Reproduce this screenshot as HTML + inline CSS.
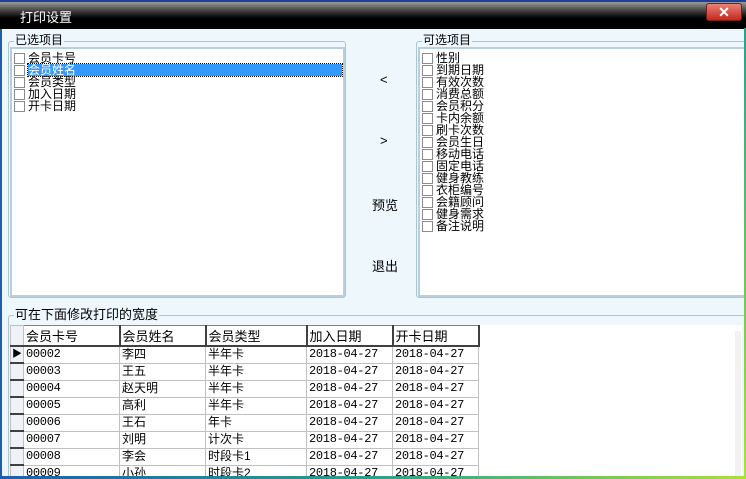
<!DOCTYPE html>
<html><head><meta charset="utf-8"><style>
*{margin:0;padding:0;box-sizing:border-box}
html,body{width:746px;height:479px;overflow:hidden}
body{background:#eef7fc;font-family:"Liberation Sans","Noto Sans CJK SC","WenQuanYi Zen Hei",sans-serif;font-size:12px;color:#000;position:relative}
.abs{position:absolute}
#title{left:0;top:0;width:746px;height:29px;border-top:2px solid #1d3f9a;background:linear-gradient(#9a9a9a,#3a3a3a 35%,#000 60%,#000);}
#title span{position:absolute;left:20px;top:5px;color:#fff;font-size:13px}
#close{right:4px;top:3px;width:36px;height:18px;background:linear-gradient(#e8827a,#c4281c);border:1px solid #7a1d15;border-radius:3px;color:#fff;font-weight:bold;text-align:center;line-height:16px;font-size:14px}
#leftedge{left:0;top:0;width:2px;height:479px;background:#1d5fae}
#rightedge{right:0;top:28px;width:2px;height:451px;background:linear-gradient(#2aa08c,#a8e23a)}
.grp{position:absolute;border:1px solid #a9c6d8;border-radius:3px}
.legend{position:absolute;background:#eef7fc;padding:0 1px;line-height:13px}
.box{position:absolute;background:#fff;border:2px solid #b9cfdd;}
.item{height:12px;line-height:12px;white-space:nowrap;position:relative;padding-left:16px}
.item i{position:absolute;left:2px;top:1px;width:11px;height:11px;border:1px solid #8a8a8a;background:#fff}
.sel span{background:#3399ff;color:#fff;outline:1px dotted #000;display:inline-block;width:314px}
.btn{position:absolute;font-size:13px}
table{border-collapse:collapse;position:absolute;left:10px;top:325px;background:#fff}
td{border:1px solid #c0c0c0;height:17px;padding:0 2px;font-size:12px;white-space:nowrap;line-height:15px}
th{border:1px solid #808080;border-right:2px solid #404040;border-bottom:2px solid #404040;height:17px;font-weight:normal;text-align:left;padding:0 2px;background:#fff;font-size:13px}
td.ind{width:13px;background:#eef2f6;border-color:#c0c0c0;border-bottom:2px solid #404040;padding:0}
td.d{font-family:"Liberation Mono",monospace;font-size:12px;letter-spacing:-0.3px}
</style></head><body>
<div id="leftedge" class="abs"></div>
<div id="title" class="abs"><span>打印设置</span></div>
<div id="close" class="abs">✕</div>

<div class="grp" style="left:8px;top:41px;width:338px;height:257px"></div>
<div class="legend" style="left:14px;top:34px">已选项目</div>
<div class="box" style="left:10px;top:47px;width:335px;height:250px;padding-top:3px">
<div class="item"><i></i>会员卡号</div>
<div class="item sel"><i></i><span>会员姓名</span></div>
<div class="item"><i></i>会员类型</div>
<div class="item"><i></i>加入日期</div>
<div class="item"><i></i>开卡日期</div>
</div>

<div class="grp" style="left:416px;top:41px;width:330px;height:257px"></div>
<div class="legend" style="left:422px;top:34px">可选项目</div>
<div class="box" style="left:418px;top:47px;width:328px;height:250px;padding-top:3px">
<div class="item"><i></i>性别</div>
<div class="item"><i></i>到期日期</div>
<div class="item"><i></i>有效次数</div>
<div class="item"><i></i>消费总额</div>
<div class="item"><i></i>会员积分</div>
<div class="item"><i></i>卡内余额</div>
<div class="item"><i></i>刷卡次数</div>
<div class="item"><i></i>会员生日</div>
<div class="item"><i></i>移动电话</div>
<div class="item"><i></i>固定电话</div>
<div class="item"><i></i>健身教练</div>
<div class="item"><i></i>衣柜编号</div>
<div class="item"><i></i>会籍顾问</div>
<div class="item"><i></i>健身需求</div>
<div class="item"><i></i>备注说明</div>
</div>

<div class="btn" style="left:380px;top:72px">&lt;</div>
<div class="btn" style="left:380px;top:133px">&gt;</div>
<div class="btn" style="left:372px;top:195px">预览</div>
<div class="btn" style="left:372px;top:256px">退出</div>

<div class="grp" style="left:8px;top:315px;width:740px;height:164px"></div>
<div class="legend" style="left:14px;top:308px;font-size:13px">可在下面修改打印的宽度</div>
<div class="abs" style="left:10px;top:325px;width:732px;height:154px;background:#fff"></div>
<div class="abs" style="left:735px;top:331px;width:6px;height:148px;background:#f2f2f2"></div>
<table>
<tr><td class="ind" style="border-bottom:2px solid #404040"></td><th style="width:96px">会员卡号</th><th style="width:86px">会员姓名</th><th style="width:101px">会员类型</th><th style="width:86px">加入日期</th><th style="width:86px">开卡日期</th></tr>
<tr><td class="ind" style="font-size:10px;text-align:center">▶</td><td class="d">00002</td><td>李四</td><td>半年卡</td><td class="d">2018-04-27</td><td class="d">2018-04-27</td></tr>
<tr><td class="ind"></td><td class="d">00003</td><td>王五</td><td>半年卡</td><td class="d">2018-04-27</td><td class="d">2018-04-27</td></tr>
<tr><td class="ind"></td><td class="d">00004</td><td>赵天明</td><td>半年卡</td><td class="d">2018-04-27</td><td class="d">2018-04-27</td></tr>
<tr><td class="ind"></td><td class="d">00005</td><td>高利</td><td>半年卡</td><td class="d">2018-04-27</td><td class="d">2018-04-27</td></tr>
<tr><td class="ind"></td><td class="d">00006</td><td>王石</td><td>年卡</td><td class="d">2018-04-27</td><td class="d">2018-04-27</td></tr>
<tr><td class="ind"></td><td class="d">00007</td><td>刘明</td><td>计次卡</td><td class="d">2018-04-27</td><td class="d">2018-04-27</td></tr>
<tr><td class="ind"></td><td class="d">00008</td><td>李会</td><td>时段卡1</td><td class="d">2018-04-27</td><td class="d">2018-04-27</td></tr>
<tr><td class="ind"></td><td class="d">00009</td><td>小孙</td><td>时段卡2</td><td class="d">2018-04-27</td><td class="d">2018-04-27</td></tr>
</table>
<div id="rightedge" class="abs"></div>
<div class="abs" style="left:0;top:476px;width:746px;height:3px;background:linear-gradient(90deg,#1d5fae,#2aa08c,#a8e23a)"></div>
</body></html>
